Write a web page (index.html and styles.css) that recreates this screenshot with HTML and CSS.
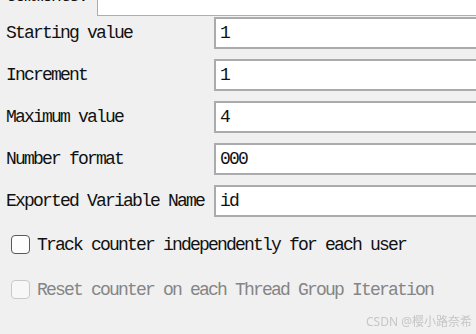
FILE: index.html
```html
<!DOCTYPE html>
<html lang="en">
<head>
    <meta charset="UTF-8">
    <title>Counter</title>
    <link rel="stylesheet" href="styles.css">
</head>
<body>
    <div class="panel">
        <div class="comments">
            <span class="comments-label">Comments:</span>
            <div class="comments-box"></div>
        </div>

        <div class="fields">
            <label class="field-label">Starting value</label>
            <div class="field">1</div>
            <label class="field-label">Increment</label>
            <div class="field">1</div>
            <label class="field-label">Maximum value</label>
            <div class="field">4</div>
            <label class="field-label">Number format</label>
            <div class="field">000</div>
            <label class="field-label">Exported Variable Name</label>
            <div class="field">id</div>
        </div>

        <div class="check">
            <span class="box"></span>
            <span>Track counter independently for each user</span>
        </div>
        <div class="check disabled">
            <span class="box"></span>
            <span>Reset counter on each Thread Group Iteration</span>
        </div>
    </div>
    <div class="watermark">CSDN @樱小路奈希</div>
</body>
</html>
```

FILE: styles.css
```css
body {
    margin: 0;
    background: #f0f0f0;
    font-family: "Liberation Mono", monospace;
    font-size: 18px;
    letter-spacing: -1.8px;
    color: #111;
    overflow: hidden;
}
.panel {
    margin-top: -16px;
    padding-left: 6px;
}
.comments {
    display: flex;
    height: 32px;
}
.comments-label {
    width: 91px;
    line-height: 24px;
}
.comments-box {
    flex: 1;
    background: white;
    border: 1px solid #adadad;
    border-right: none;
}
.fields {
    display: grid;
    grid-template-columns: 208px 1fr;
    row-gap: 10px;
    margin-top: 1px;
}
.field-label {
    display: flex;
    align-items: center;
}
.field {
    height: 32px;
    box-sizing: border-box;
    background: white;
    border: 2px solid #ababae;
    border-right: none;
    padding-left: 4px;
    display: flex;
    align-items: center;
}
.check {
    display: flex;
    align-items: center;
    gap: 7px;
    height: 19px;
    margin-left: 5px;
    margin-top: 18px;
}
.check + .check {
    margin-top: 26px;
}
.box {
    width: 19px;
    height: 19px;
    box-sizing: border-box;
    border: 1.5px solid #595959;
    border-radius: 4px;
    background: #fdfdfd;
}
.disabled {
    color: #858585;
}
.disabled .box {
    border-color: #c9c9c9;
    background: #f7f7f7;
}
.watermark {
    position: fixed;
    right: 4px;
    bottom: 4px;
    font-family: "Noto Sans", "Noto Sans CJK SC", sans-serif;
    font-size: 12px;
    letter-spacing: 0;
    color: #c6c6c6;
}
```
